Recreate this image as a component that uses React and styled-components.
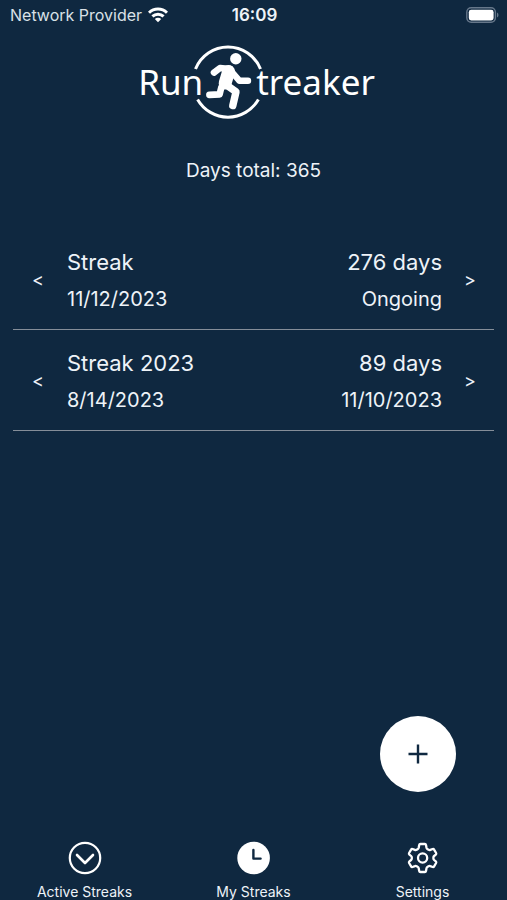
import React from "react";
import styled, { createGlobalStyle } from "styled-components";

const colors = { navy: "#0f2840", text: "#eef3f8", white: "#ffffff", line: "#858e99" };

const GlobalStyle = createGlobalStyle`
  *, *::before, *::after { box-sizing: border-box; }
  body { margin: 0; background: ${colors.navy}; }
  button { font: inherit; color: inherit; border: 0; background: none; padding: 0; cursor: pointer; }
`;

const Screen = styled.div`
  display: flex;
  flex-direction: column;
  min-height: 100vh;
  background: ${colors.navy};
  color: ${colors.text};
  font-family: Inter, "Liberation Sans", sans-serif;
`;

const StatusBar = styled.div`
  display: grid;
  grid-template-columns: 1fr auto 1fr;
  align-items: center;
  height: 30px;
  padding: 0 8px 0 10px;
  font-size: 16px;
  line-height: 20px;
`;

const Carrier = styled.div`
  display: flex;
  align-items: center;
  gap: 6px;
  white-space: nowrap;
  color: #d9e0e7;
`;

const Clock = styled.time`
  font-size: 17px;
  font-weight: 600;
`;

const BatteryIcon = styled.svg`
  justify-self: end;
  display: block;
`;

const Icon = styled.svg`
  display: block;
  flex: none;
`;

const Brand = styled.h1`
  display: flex;
  align-items: center;
  justify-content: center;
  height: 76px;
  margin: 14px 0 0;
  padding-left: 6px;
  font-family: "Noto Sans", "Open Sans", sans-serif;
  font-size: 35px;
  font-weight: 400;
  line-height: 40px;
  color: ${colors.white};
`;

const BrandMark = styled.svg`
  display: block;
  flex: none;
  margin: 0 -10px 0 -13px;
`;

const Total = styled.p`
  margin: 39px 0 46px;
  text-align: center;
  font-size: 19px;
  line-height: 24px;
`;

const Main = styled.main`
  position: relative;
  flex: 1;
`;

const StreakList = styled.ul`
  list-style: none;
  margin: 0 13px;
  padding: 0;
`;

const StreakRow = styled.li`
  display: grid;
  grid-template-columns: 50px 1fr auto 48px;
  column-gap: 4px;
  align-items: center;
  height: 101px;
  padding-top: 2px;
  border-bottom: 1px solid ${colors.line};
`;

const StepButton = styled.button`
  height: 48px;
  font-size: 18px;
  line-height: 24px;
  text-align: center;
`;

const Details = styled.div`
  display: flex;
  flex-direction: column;
  gap: 8px;
  text-align: ${({ $align }) => $align};
`;

const Title = styled.span`
  font-size: 22px;
  line-height: 30px;
`;

const Caption = styled.span`
  font-size: 20px;
  line-height: 28px;
`;

const AddButton = styled.button`
  position: absolute;
  right: 51px;
  bottom: 44px;
  display: grid;
  place-items: center;
  width: 76px;
  height: 76px;
  border-radius: 50%;
  background: ${colors.white};
`;

const TabBar = styled.nav`
  display: grid;
  grid-template-columns: repeat(3, 1fr);
  height: 64px;
`;

const Tab = styled.button`
  display: flex;
  flex-direction: column;
  align-items: center;
  padding-top: 4px;
  gap: 8px;
  font-size: 14px;
  line-height: 16px;
`;

const streaks = [
  { name: "Streak", start: "11/12/2023", days: 276, end: "Ongoing" },
  { name: "Streak 2023", start: "8/14/2023", days: 89, end: "11/10/2023" },
];

function Wifi() {
  return (
    <Icon width="20" height="16" viewBox="0 0 20 16" fill="none" stroke="#fff" strokeWidth="3" aria-hidden="true">
      <path d="M1 5.8C6 .8 14 .8 19 5.8" />
      <path d="M4.4 9.4C7.6 6.4 12.4 6.4 15.6 9.4" />
      <path d="M10 15.2 6.8 12C8.6 10.3 11.4 10.3 13.2 12Z" fill="#fff" stroke="none" />
    </Icon>
  );
}

function Battery() {
  return (
    <BatteryIcon width="33" height="16" viewBox="0 0 33 16" role="img" aria-label="Battery full">
      <rect x=".8" y=".8" width="28.6" height="14.4" rx="4.4" fill="none" stroke="#66778a" strokeWidth="1.4" />
      <rect x="2.8" y="2.8" width="24.8" height="10.6" rx="2.4" fill="#fff" />
      <path d="M31 5.5C33 6.5 33 9.5 31 10.5Z" fill="#66778a" />
    </BatteryIcon>
  );
}

function Runner() {
  return (
    <BrandMark width="76" height="76" viewBox="0 0 76 76" fill="none" stroke="#fff" strokeLinecap="round" strokeLinejoin="round" aria-hidden="true">
      <path d="M5.5 25A35 35 0 0 1 70.5 25M7.6 55.5A35 35 0 0 0 68.4 55.5" strokeWidth="3" strokeLinecap="butt" />
      <circle cx="45.8" cy="14.7" r="5.7" fill="#fff" stroke="none" />
      <path d="M24 28.6 30 24 40 25" strokeWidth="6.6" />
      <path d="M41 27 49.5 36.8H58" strokeWidth="6.4" />
      <path d="M38.6 27.5 35.2 39" strokeWidth="13" />
      <path d="M35 40 46 47.8 42.8 61.6" strokeWidth="7.4" />
      <path d="M31.4 43 29.6 50.4 19.4 50.9" strokeWidth="6.6" />
    </BrandMark>
  );
}

function ActiveIcon() {
  return (
    <Icon width="36" height="36" viewBox="0 0 36 36" fill="none" stroke="#fff" strokeWidth="2.2" strokeLinecap="round" strokeLinejoin="round" aria-hidden="true">
      <circle cx="18" cy="18" r="15.2" />
      <path d="m10 15 8 8 8-8" strokeWidth="2.6" />
    </Icon>
  );
}

function ClockIcon() {
  return (
    <Icon width="36" height="36" viewBox="0 0 36 36" fill="none" aria-hidden="true">
      <circle cx="17.6" cy="18" r="16.3" fill="#fff" />
      <path d="M17.4 10V18.6H24.6" stroke={colors.navy} strokeWidth="2.4" strokeLinecap="round" strokeLinejoin="round" />
    </Icon>
  );
}

function GearIcon() {
  return (
    <Icon width="36" height="36" viewBox="0 0 36 36" fill="none" stroke="#fff" strokeWidth="2.3" strokeLinejoin="round" aria-hidden="true">
      <path d="M15.4 4H19.8Q20.8 4 21 5L21.5 7.8Q21.7 8.7 22.6 9.2L23.6 9.8Q24.4 10.3 25.3 9.9L27.6 9Q28.6 8.7 29.1 9.6L31.1 13Q31.6 13.9 30.8 14.6L29.1 16Q28.4 16.6 28.4 17.5V18.5Q28.4 19.4 29.1 20L30.8 21.4Q31.6 22.1 31.1 23L29.1 26.4Q28.6 27.3 27.6 27L25.3 26.1Q24.4 25.7 23.6 26.2L22.6 26.8Q21.7 27.3 21.5 28.2L21 31Q20.8 32 19.8 32H15.4Q14.4 32 14.2 31L13.7 28.2Q13.5 27.3 12.6 26.8L11.6 26.2Q10.8 25.7 9.9 26.1L7.6 27Q6.6 27.3 6.1 26.4L4.1 23Q3.6 22.1 4.4 21.4L6.1 20Q6.8 19.4 6.8 18.5V17.5Q6.8 16.6 6.1 16L4.4 14.6Q3.6 13.9 4.1 13L6.1 9.6Q6.6 8.7 7.6 9L9.9 9.9Q10.8 10.3 11.6 9.8L12.6 9.2Q13.5 8.7 13.7 7.8L14.2 5Q14.4 4 15.4 4Z" />
      <circle cx="17.6" cy="18" r="4.6" />
    </Icon>
  );
}

const tabs = [
  { label: "Active Streaks", Glyph: ActiveIcon },
  { label: "My Streaks", Glyph: ClockIcon, current: true },
  { label: "Settings", Glyph: GearIcon },
];

export default function App() {
  return (
    <Screen>
      <GlobalStyle />
      <StatusBar>
        <Carrier>Network Provider <Wifi /></Carrier>
        <Clock>16:09</Clock>
        <Battery />
      </StatusBar>
      <Brand>
        <span>Run</span>
        <Runner />
        <span>treaker</span>
      </Brand>
      <Total>Days total: 365</Total>
      <Main>
        <StreakList>
          {streaks.map((s) => (
            <StreakRow key={s.name}>
              <StepButton type="button" aria-label={`Previous, ${s.name}`}>&lt;</StepButton>
              <Details $align="left">
                <Title>{s.name}</Title>
                <Caption>{s.start}</Caption>
              </Details>
              <Details $align="right">
                <Title>{s.days} days</Title>
                <Caption>{s.end}</Caption>
              </Details>
              <StepButton type="button" aria-label={`Next, ${s.name}`}>&gt;</StepButton>
            </StreakRow>
          ))}
        </StreakList>
        <AddButton type="button" aria-label="Add streak">
          <Icon width="20" height="20" viewBox="0 0 20 20" fill="none" stroke={colors.navy} strokeWidth="2.4" aria-hidden="true">
            <path d="M10 .5V19.5M.5 10H19.5" />
          </Icon>
        </AddButton>
      </Main>
      <TabBar aria-label="Main">
        {tabs.map(({ label, Glyph, current }) => (
          <Tab key={label} type="button" aria-current={current ? "page" : undefined}>
            <Glyph />
            {label}
          </Tab>
        ))}
      </TabBar>
    </Screen>
  );
}
